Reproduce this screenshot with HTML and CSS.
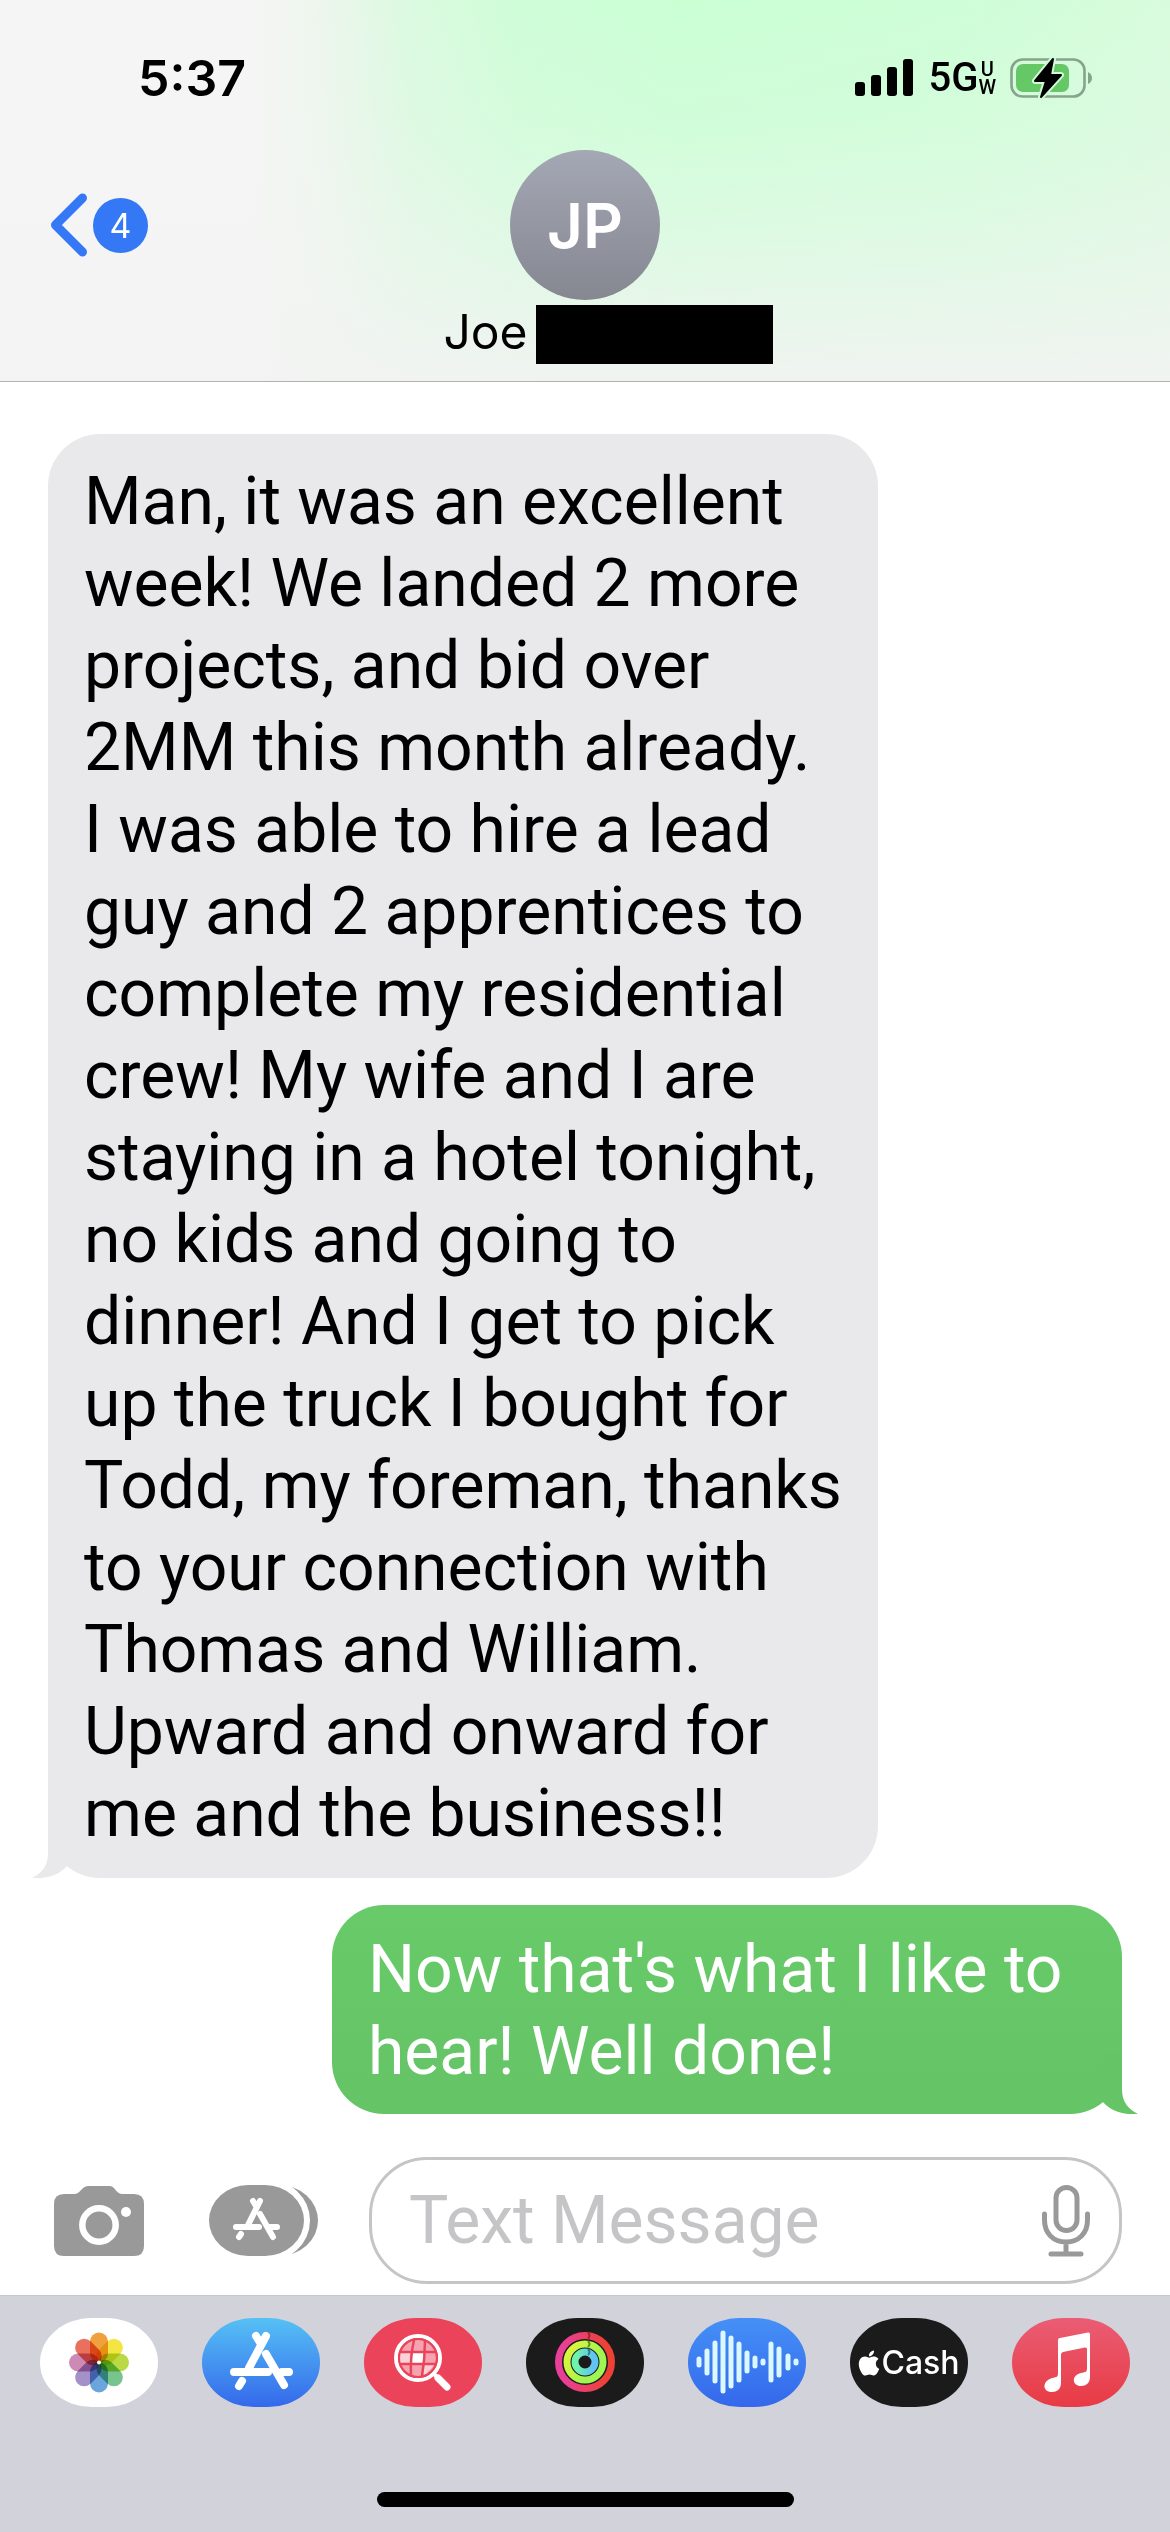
FILE: index.html
```html
<!DOCTYPE html>
<html lang="en">
<head>
<meta charset="utf-8">
<meta name="viewport" content="width=device-width, initial-scale=1">
<title>Messages</title>
<link rel="stylesheet" href="styles.css">
</head>
<body>
<header class="top">
  <div class="status">
    <time class="clock">5:37</time>
    <div class="indicators">
      <svg class="signal" width="58" height="38" viewBox="0 0 58 38" aria-hidden="true"><rect y="23" width="10" height="14" rx="3"/><rect x="16" y="16" width="10" height="21" rx="3"/><rect x="32" y="8" width="10" height="29" rx="3"/><rect x="48" width="10" height="37" rx="3"/></svg>
      <span class="network">5G</span>
      <span class="band"><span>U</span><span>W</span></span>
      <svg class="battery" width="82" height="42" viewBox="0 0 82 42" aria-hidden="true">
        <rect x="1.5" y="2.5" width="73" height="37" rx="11" fill="none" stroke="#86a48b" stroke-width="2.6"/>
        <rect x="6" y="7" width="53" height="28" rx="7" fill="#66c766"/>
        <path d="M78 15q4 2 4 6t-4 6z" fill="#86a48b"/>
        <path d="M43 2 25 24H36L31 40 51 18H40z" fill="#000" stroke="#cffbd7" stroke-width="6" stroke-linejoin="round"/>
        <path d="M43 2 25 24H36L31 40 51 18H40z" fill="#000" stroke="#000" stroke-width="2" stroke-linejoin="round"/>
      </svg>
    </div>
  </div>
  <nav class="nav">
    <button class="back" type="button" aria-label="Back, 4 unread">
      <svg width="38" height="64" viewBox="0 0 38 64" aria-hidden="true"><path d="M32.500 5 5.500 32 32.500 59" fill="none" stroke="#3478f6" stroke-width="9" stroke-linecap="round" stroke-linejoin="round"/></svg>
      <span class="count">4</span>
    </button>
    <button class="avatar" type="button">JP</button>
  </nav>
  <h1 class="name">Joe<span class="redacted"></span></h1>
</header>

<main class="thread">
  <p class="bubble received">Man, it was an excellent<br>week! We landed 2 more<br>projects, and bid over<br>2MM this month already.<br>I was able to hire a lead<br>guy and 2 apprentices to<br>complete my residential<br>crew! My wife and I are<br>staying in a hotel tonight,<br>no kids and going to<br>dinner! And I get to pick<br>up the truck I bought for<br>Todd, my foreman, thanks<br>to your connection with<br>Thomas and William.<br>Upward and onward for<br>me and the business!!
    <svg class="tail" width="36" height="60" viewBox="0 0 36 60" aria-hidden="true"><path d="M16 0V35C16 48 10 55 0 60 14 61 26 58 35 48V0z"/></svg>
  </p>
  <p class="bubble sent">Now that's what I like to<br>hear! Well done!
    <svg class="tail" width="36" height="60" viewBox="0 0 36 60" aria-hidden="true"><path d="M20 0V35C20 48 26 55 36 60 22 61 10 58 1 48V0z"/></svg>
  </p>
</main>

<footer class="bottom">
  <form class="compose">
    <button class="tool camera" type="button" aria-label="Camera">
      <svg width="90" height="70" viewBox="0 0 90 70" aria-hidden="true">
        <path d="M10 8H20C27 8 27 0 35 0H55C62 0 61 8 69 8H80Q90 8 90 18V60Q90 70 80 70H10Q0 70 0 60V18Q0 8 10 8z" fill="#999"/>
        <circle cx="45" cy="39" r="16.700" fill="none" stroke="#fff" stroke-width="6.500"/><circle cx="72" cy="26" r="5" fill="#fff"/>
      </svg>
    </button>
    <button class="tool" type="button" aria-label="Apps">
      <svg width="110" height="71" viewBox="0 0 110 71" aria-hidden="true">
        <rect x="14" width="95" height="71" rx="39" fill="#999"/>
        <rect x="-6" y="-6" width="107" height="83" rx="44" fill="#fff"/>
        <rect width="95" height="71" rx="39" fill="#999"/>
        <path d="M51 16 39 40M32 49 30 52M44 16 47 21M51 29 64 52M27 42H50M61 42H68" fill="none" stroke="#fff" stroke-width="6" stroke-linecap="round"/>
      </svg>
    </button>
    <div class="field">
      <input class="message" type="text" placeholder="Text Message" aria-label="Text Message">
      <button class="tool" type="button" aria-label="Dictate">
        <svg width="48" height="72" viewBox="0 0 48 72" fill="none" stroke="#999" stroke-width="5" stroke-linecap="round" aria-hidden="true"><rect x="14" y="2.500" width="21" height="43" rx="10.500"/><path d="M2.500 29V35C2.500 48 11 57 24 57S45.500 48 45.500 35V29M24 57V68M9 69H39"/></svg>
      </button>
    </div>
  </form>

  <div class="dock">
    <div class="apps">
      <button class="app photos" type="button" aria-label="Photos">
        <svg width="118" height="89" viewBox="-59 -44.500 118 89" aria-hidden="true">
          <g class="petals">
            <rect x="-9" y="-30" width="18" height="30" rx="9" fill="#f0a03c"/>
            <rect x="-9" y="-30" width="18" height="30" rx="9" fill="#f3e644" transform="rotate(45)"/>
            <rect x="-9" y="-30" width="18" height="30" rx="9" fill="#b9d945" transform="rotate(90)"/>
            <rect x="-9" y="-30" width="18" height="30" rx="9" fill="#77c48e" transform="rotate(135)"/>
            <rect x="-9" y="-30" width="18" height="30" rx="9" fill="#6aa6dc" transform="rotate(180)"/>
            <rect x="-9" y="-30" width="18" height="30" rx="9" fill="#a391c8" transform="rotate(225)"/>
            <rect x="-9" y="-30" width="18" height="30" rx="9" fill="#cd8ab4" transform="rotate(270)"/>
            <rect x="-9" y="-30" width="18" height="30" rx="9" fill="#e8705d" transform="rotate(315)"/>
          </g>
          <circle r="2" fill="#fff"/>
        </svg>
      </button>
      <button class="app store" type="button" aria-label="App Store">
        <svg width="118" height="89" viewBox="0 0 118 89" aria-hidden="true"><path d="M64 18 47 50M40 63 37 68M54 18 59 26M64 36 82 67M32 54H66M80 54H87" fill="none" stroke="#fff" stroke-width="8" stroke-linecap="round"/></svg>
      </button>
      <button class="app images" type="button" aria-label="Image search">
        <svg width="118" height="89" viewBox="0 0 118 89" aria-hidden="true">
          <circle cx="54" cy="40" r="18" fill="#f5a3b0"/>
          <path d="M48 35H60V45H47z" fill="#fff"/><path d="M36 35H46V45H36zM61 47H70L62 56H59z" fill="#fbd0d7"/>
          <path d="M50 22Q46 40 47 58M61 22Q61 40 58 58M36 34H72M36 46H72" fill="none" stroke="#eb445a" stroke-width="2.500"/>
          <circle cx="54" cy="40" r="22" fill="none" stroke="#fff" stroke-width="4"/><circle cx="54" cy="40" r="19" fill="none" stroke="#eb445a" stroke-width="2"/>
          <path d="M70 56 73 59" stroke="#fff" stroke-width="4"/><path d="M74 60 83 69" stroke="#fff" stroke-width="7" stroke-linecap="round"/>
        </svg>
      </button>
      <button class="app dark" type="button" aria-label="Fitness">
        <svg width="118" height="89" viewBox="0 0 118 89" fill="none" aria-hidden="true">
          <defs>
            <linearGradient id="move"><stop offset=".1" stop-color="#e83f98"/><stop offset=".9" stop-color="#ee4135"/></linearGradient>
            <linearGradient id="exercise" x2="1" y2=".6"><stop offset=".1" stop-color="#dcf53d"/><stop offset=".8" stop-color="#9ff551"/></linearGradient>
            <linearGradient id="stand"><stop offset=".1" stop-color="#6ef2ae"/><stop offset=".9" stop-color="#5fc4f3"/></linearGradient>
          </defs>
          <circle cx="59" cy="44" r="26.500" stroke="url(#move)" stroke-width="7"/>
          <circle cx="59" cy="44" r="18" stroke="url(#exercise)" stroke-width="7"/>
          <circle cx="59" cy="44" r="10" stroke="url(#stand)" stroke-width="7"/>
          <path d="M62 14.500q3 3 0 6" stroke="#9c2430" stroke-width="2"/><path d="M62 23q3 3 0 6" stroke="#638c2c" stroke-width="2"/><path d="M62 31q3 3 0 6" stroke="#2f7f86" stroke-width="2"/>
        </svg>
      </button>
      <button class="app audio" type="button" aria-label="Audio">
        <svg width="118" height="89" viewBox="0 0 118 89" aria-hidden="true"><path d="M11 41V47M19 33V55M27 25V63M35 15V73M43 20V68M51 26V62M59 35V53M67 40V48M75 43V45M83 26V62M91 31V57M100 38V50M108 43V45" stroke="#dcf8ff" stroke-width="5" stroke-linecap="round"/></svg>
      </button>
      <button class="app dark cash" type="button" aria-label="Apple Cash">
        <svg width="22" height="26" viewBox="1.500 0 21 24" aria-hidden="true"><path fill="#fff" d="M12.152 6.896c-.948 0-2.415-1.078-3.960-1.040-2.040.027-3.910 1.183-4.961 3.014-2.117 3.675-.546 9.103 1.519 12.090 1.013 1.454 2.208 3.090 3.792 3.039 1.520-.065 2.090-.987 3.935-.987 1.831 0 2.350.987 3.960.948 1.637-.026 2.676-1.480 3.676-2.948 1.156-1.688 1.636-3.325 1.662-3.415-.039-.013-3.182-1.221-3.220-4.857-.026-3.040 2.480-4.494 2.597-4.559-1.429-2.090-3.623-2.324-4.390-2.376-2-.156-3.675 1.090-4.610 1.090zM15.530 3.830c.843-1.012 1.400-2.427 1.245-3.830-1.207.052-2.662.805-3.532 1.818-.780.896-1.454 2.338-1.273 3.714 1.338.104 2.715-.688 3.559-1.701"/></svg>
        <span>Cash</span>
      </button>
      <button class="app music" type="button" aria-label="Music">
        <svg width="118" height="89" viewBox="0 0 118 89" aria-hidden="true"><path fill="#fff" d="M46 22Q46 20 48 20L76 14.500Q78 14 78 16.500V59C78 65 74 68 69 68 60 68 59 57 69 55 74 54 75 54 75 50V31Q75 29 73 29.500L51 34Q49 34.500 49 36.500V65C49 71 45 74 40 74 30 74 30 63 40 60 45 59 46 59 46 55z"/></svg>
      </button>
    </div>
    <div class="home"></div>
  </div>
</footer>
</body>
</html>
```

FILE: styles.css
```css
* { box-sizing: border-box; }

body {
  margin: 0;
  min-height: 100vh;
  display: flex;
  flex-direction: column;
  background: #fff;
  color: #000;
  font-family: Inter, "Liberation Sans", sans-serif;
}

button {
  border: 0;
  padding: 0;
  background: none;
  font: inherit;
  color: inherit;
}

svg { display: block; }

/* Header */
.top {
  border-bottom: 1px solid #b0b2b0;
  background:
    linear-gradient(to bottom, rgba(244, 244, 244, 0) 0%, rgba(244, 244, 244, .15) 32%, rgba(243, 244, 243, .5) 65%, rgba(242, 243, 242, .95) 100%),
    linear-gradient(to right, #f5f5f5 0%, #f4f5f4 22%, #ecf6ec 28%, #dbfae0 35%, #cffdd8 44%, #caffd4 58%, #cefed7 82%, #d8fbdd 100%);
}

.status {
  height: 150px;
  padding: 6px 78px 0 138px;
  display: flex;
  align-items: center;
  justify-content: space-between;
}

.clock { font-size: 50px; font-weight: 600; }

.indicators { display: flex; align-items: center; }

.network {
  margin-left: 15px;
  font: 500 40px/40px Roboto, sans-serif;
}

.band {
  margin-right: 14px;
  display: flex;
  flex-direction: column;
  align-items: center;
  font: 500 20px/18px Roboto, sans-serif;
}

.nav {
  display: grid;
  grid-template-columns: 1fr auto 1fr;
  align-items: center;
}

.back {
  padding-left: 50px;
  display: flex;
  align-items: center;
  gap: 5px;
}

.count {
  width: 55px;
  height: 55px;
  border-radius: 50%;
  background: #3478f6;
  color: #fff;
  font-size: 34px;
  line-height: 55px;
  text-align: center;
}

.avatar {
  width: 150px;
  height: 150px;
  border-radius: 50%;
  background: linear-gradient(#a4a8b4, #858791);
  color: #fff;
  font-size: 62px;
  font-weight: 600;
}

.name {
  margin: 0;
  padding: 5px 0 17px 46px;
  display: flex;
  justify-content: center;
  gap: 8px;
  font-size: 48px;
  font-weight: 400;
  line-height: 54px;
}

.redacted { width: 237px; height: 59px; background: #000; }

/* Conversation */
.thread {
  flex: 1;
  padding: 52px 48px 0;
  display: flex;
  flex-direction: column;
  gap: 27px;
}

.bubble {
  position: relative;
  margin: 0;
  border-radius: 52px;
  font-family: Roboto, sans-serif;
  font-size: 66px;
  line-height: 82px;
  white-space: nowrap;
}

.received {
  align-self: flex-start;
  width: 830px;
  padding: 27px 36px 23px;
  background: #e9e9eb;
}

.sent {
  align-self: flex-end;
  width: 790px;
  padding: 24px 36px 21px;
  background: linear-gradient(#68ca69, #65c466);
  color: #fff;
}

.tail { position: absolute; bottom: 0; }
.received .tail { left: -16px; fill: #e9e9eb; }
.sent .tail { right: -16px; fill: #65c466; }

/* Message entry */
.compose {
  padding: 43px 48px 11px 54px;
  display: flex;
  align-items: center;
}

.camera { margin-right: 65px; }

.field {
  flex: 1;
  min-width: 0;
  height: 127px;
  margin-left: 50px;
  padding: 0 29px 0 37px;
  border: 3px solid #c5c5c6;
  border-radius: 58px;
  display: flex;
  align-items: center;
}

.message {
  flex: 1;
  min-width: 0;
  border: 0;
  padding: 0;
  outline: 0;
  background: none;
  font-family: Roboto, sans-serif;
  font-size: 66px;
}

.message::placeholder { color: #c5c5c7; opacity: 1; }

/* App strip */
.dock {
  padding: 22px 40px 25px;
  border-top: 1px solid #c6c8cc;
  background: #d1d2da;
}

.apps { display: flex; justify-content: space-between; }

.app {
  width: 118px;
  height: 89px;
  border-radius: 52px / 44px;
  overflow: hidden;
}

.photos { background: #fff; }
.petals { isolation: isolate; }
.petals rect { mix-blend-mode: multiply; }
.store { background: linear-gradient(#56c1f5, #3468eb); }
.images { background: #eb445a; }
.dark { background: #1b1b1b; }
.audio { background: linear-gradient(#4590f7, #3468eb); }
.music { background: linear-gradient(#ea5d74, #e83a44); }

.cash {
  display: flex;
  align-items: center;
  justify-content: center;
  gap: 1px;
  color: #fff;
  font-size: 32px;
  font-weight: 500;
}

.home {
  width: 417px;
  height: 15px;
  margin: 85px auto 0;
  border-radius: 8px;
  background: #000;
}
```
